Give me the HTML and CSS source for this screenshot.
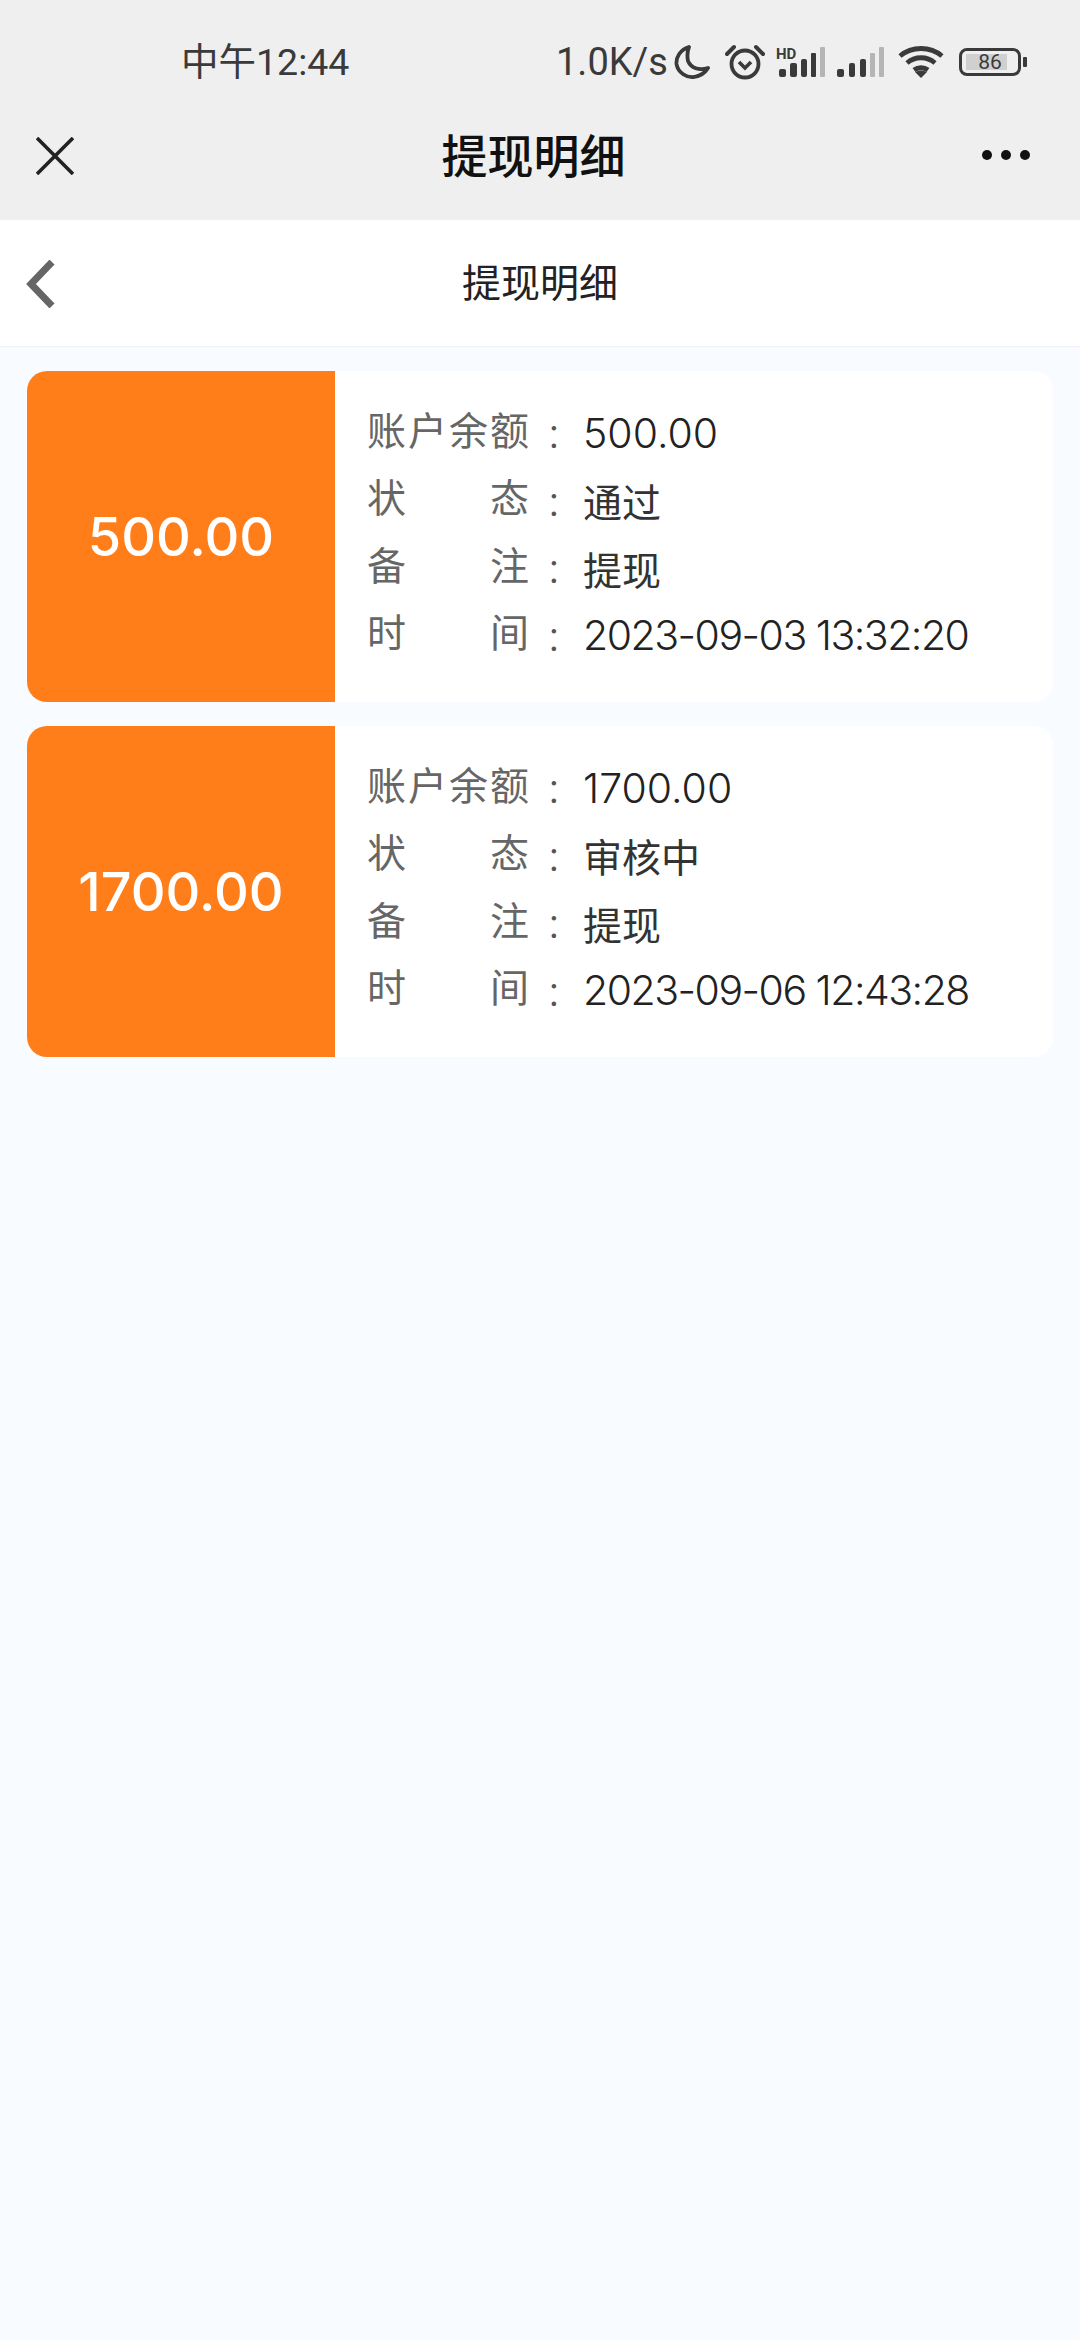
FILE: index.html
```html
<!DOCTYPE html>
<html lang="zh-CN">
<head>
    <meta charset="UTF-8">
    <meta name="viewport" content="width=device-width, initial-scale=1.0">
    <title>提现明细</title>
    <link rel="stylesheet" href="styles.css">
</head>
<body>

    <div class="top-bar">
        <div class="status-bar">
            <span class="status-time">中午12:44</span>
            <div class="status-right">
                <span class="status-speed">1.0K/s</span>
                <svg class="icon-moon" width="36" height="36" viewBox="0 0 36 36"><path d="M15 3 C6 6 2 13 2.500 20 C4 29 13 34 20 33 C26 32 31 29 34 24 C25 27 17 24 14 17 C13 12 13 8 15 3 Z" fill="none" stroke="#3a3a3a" stroke-width="3.800" stroke-linejoin="round"/></svg>
                <svg class="icon-alarm" width="40" height="36" viewBox="0 0 40 36"><circle cx="20" cy="20" r="13.500" fill="none" stroke="#3a3a3a" stroke-width="3.800"/><path d="M14 18 L20 24 L26 18" fill="none" stroke="#3a3a3a" stroke-width="3.600"/><path d="M2 10 L9 3 M38 10 L31 3" stroke="#3a3a3a" stroke-width="4" stroke-linecap="round"/></svg>
                <svg class="icon-signal" width="50" height="34" viewBox="0 0 50 34">
                    <text x="0" y="14" class="hd-text">HD</text>
                    <rect x="3" y="24" width="7" height="8" rx="2" fill="#3a3a3a"/>
                    <rect x="14" y="18" width="7" height="14" rx="2" fill="#3a3a3a"/>
                    <rect x="25" y="14" width="6" height="18" rx="2" fill="#3a3a3a"/>
                    <rect x="35" y="8" width="5" height="24" rx="1" fill="#3a3a3a"/>
                    <rect x="44" y="2" width="5" height="30" rx="1" fill="#b5b5b5"/>
                </svg>
                <svg class="icon-signal" width="48" height="34" viewBox="0 0 48 34">
                    <rect x="0" y="24" width="7" height="8" rx="2" fill="#3a3a3a"/>
                    <rect x="12" y="18" width="6" height="14" rx="2" fill="#3a3a3a"/>
                    <rect x="23" y="14" width="6" height="18" rx="2" fill="#3a3a3a"/>
                    <rect x="33" y="8" width="5" height="24" rx="1" fill="#b5b5b5"/>
                    <rect x="42" y="2" width="5" height="30" rx="1" fill="#b5b5b5"/>
                </svg>
                <svg class="icon-wifi" width="46" height="34" viewBox="0 0 46 34"><path d="M2 11 C14 1 32 1 44 11 M9 18 C17 11 29 11 37 18 M16 25 C20 22 26 22 30 25" fill="none" stroke="#3a3a3a" stroke-width="4.800"/><path d="M23 33 L17 27 C21 25 25 25 29 27 Z" fill="#3a3a3a"/></svg>
                <div class="battery">
                    <div class="battery-body"><span class="battery-fill"></span><span class="battery-num">86</span></div>
                    <span class="battery-nub"></span>
                </div>
            </div>
        </div>
        <div class="title-bar">
            <svg class="icon-close" width="38" height="38" viewBox="0 0 38 38"><path d="M1 1 L37 37 M37 1 L1 37" stroke="#222" stroke-width="3.600"/></svg>
            <h1 class="title-main">提现明细</h1>
            <div class="dots"><span></span><span></span><span></span></div>
        </div>
    </div>

    <div class="nav-bar">
        <svg class="icon-back" width="30" height="48" viewBox="0 0 30 48"><path d="M26 2 L5 24 L26 46" fill="none" stroke="#666" stroke-width="7"/></svg>
        <h2 class="nav-title">提现明细</h2>
    </div>

    <div class="record-list">
        <div class="record">
            <div class="record-amount">500.00</div>
            <div class="record-info">
                <div class="info-row"><span class="info-label">账户余额</span><span class="info-colon">:</span><span class="info-value info-num">500.00</span></div>
                <div class="info-row"><span class="info-label">状态</span><span class="info-colon">:</span><span class="info-value">通过</span></div>
                <div class="info-row"><span class="info-label">备注</span><span class="info-colon">:</span><span class="info-value">提现</span></div>
                <div class="info-row"><span class="info-label">时间</span><span class="info-colon">:</span><span class="info-value info-num info-date">2023-09-03 13:32:20</span></div>
            </div>
        </div>
        <div class="record">
            <div class="record-amount">1700.00</div>
            <div class="record-info">
                <div class="info-row"><span class="info-label">账户余额</span><span class="info-colon">:</span><span class="info-value info-num">1700.00</span></div>
                <div class="info-row"><span class="info-label">状态</span><span class="info-colon">:</span><span class="info-value">审核中</span></div>
                <div class="info-row"><span class="info-label">备注</span><span class="info-colon">:</span><span class="info-value">提现</span></div>
                <div class="info-row"><span class="info-label">时间</span><span class="info-colon">:</span><span class="info-value info-num info-date">2023-09-06 12:43:28</span></div>
            </div>
        </div>
    </div>

</body>
</html>
```

FILE: styles.css
```css
body {
    font-family: Roboto, "Noto Sans CJK SC", sans-serif;
    margin: 0;
    padding: 0;
    width: 1080px;
    height: 2340px;
    overflow: hidden;
    background-color: #f8fbff;
    color: #333;
}

.top-bar {
    height: 220px;
    background-color: #efefef;
}

.status-bar {
    height: 122px;
    box-sizing: border-box;
    padding: 40px 53px 0 181px;
    display: flex;
    justify-content: space-between;
    align-items: flex-start;
}

.status-time {
    font-size: 37.500px;
    line-height: 44px;
    color: #3a3a3a;
}

.status-right {
    display: flex;
    align-items: center;
    height: 44px;
}

.status-speed {
    font-size: 38px;
    line-height: 44px;
    color: #3a3a3a;
    width: 118px;
}

.icon-alarm {
    margin-left: 15px;
}

.icon-signal {
    margin-left: 11px;
}

.icon-wifi {
    margin-left: 13px;
}

.hd-text {
    font-family: Roboto, sans-serif;
    font-size: 15px;
    font-weight: 700;
    fill: #3a3a3a;
}

.battery {
    margin-left: 15px;
    display: flex;
    align-items: center;
}

.battery-body {
    position: relative;
    width: 62px;
    height: 28px;
    box-sizing: border-box;
    border: 3px solid #3a3a3a;
    border-radius: 8px;
    display: flex;
    align-items: center;
    justify-content: center;
}

.battery-fill {
    position: absolute;
    left: 4px;
    top: 3px;
    bottom: 3px;
    width: 41px;
    background-color: #d0d0d0;
}

.battery-num {
    position: relative;
    font-size: 21px;
    color: #3a3a3a;
}

.battery-nub {
    margin-left: 2px;
    width: 4px;
    height: 10px;
    border-radius: 1px;
    background-color: #3a3a3a;
}

.title-bar {
    height: 98px;
    box-sizing: border-box;
    padding: 0 50px 0 36px;
    display: flex;
    align-items: flex-start;
    justify-content: space-between;
}

.icon-close {
    margin-top: 15px;
}

.title-main {
    margin: 1px 0 0 11px;
    font-size: 46px;
    line-height: 68px;
    font-weight: 500;
    color: #111;
}

.dots {
    margin-top: 28px;
    display: flex;
    gap: 9px;
}

.dots span {
    width: 10px;
    height: 10px;
    border-radius: 50%;
    background-color: #111;
}

.nav-bar {
    position: relative;
    height: 127px;
    box-sizing: border-box;
    padding-bottom: 7px;
    background-color: white;
    border-bottom: 1px solid #eef1f5;
    display: flex;
    align-items: center;
    justify-content: center;
}

.icon-back {
    position: absolute;
    left: 26px;
    top: 40px;
}

.nav-title {
    margin: 0;
    font-size: 39px;
    font-weight: 400;
    color: #222;
}

.record-list {
    padding: 24px 27px;
    display: flex;
    flex-direction: column;
    gap: 24px;
}

.record {
    height: 331px;
    display: flex;
    background-color: white;
    border-radius: 20px;
    overflow: hidden;
}

.record-amount {
    width: 308px;
    background-color: #ff7e1a;
    color: white;
    font-family: Inter, "Noto Sans CJK SC", sans-serif;
    font-size: 54px;
    font-weight: 500;
    display: flex;
    align-items: center;
    justify-content: center;
}

.record-info {
    padding: 28px 0 0 32px;
}

.info-row {
    height: 67.500px;
    display: flex;
    align-items: center;
}

.info-label {
    width: 162px;
    font-size: 39px;
    color: #666;
    text-align: justify;
    text-align-last: justify;
    margin-bottom: 10px;
}

.info-colon {
    width: 54px;
    padding-left: 20px;
    box-sizing: border-box;
    font-size: 40px;
    color: #555;
    margin-top: 4px;
}

.info-value {
    font-family: Inter, "Noto Sans CJK SC", sans-serif;
    font-size: 39px;
    color: #333;
}

.info-num {
    font-size: 41px;
    font-weight: 300;
    color: #222;
}

.info-date {
    letter-spacing: -1.500px;
}
```
